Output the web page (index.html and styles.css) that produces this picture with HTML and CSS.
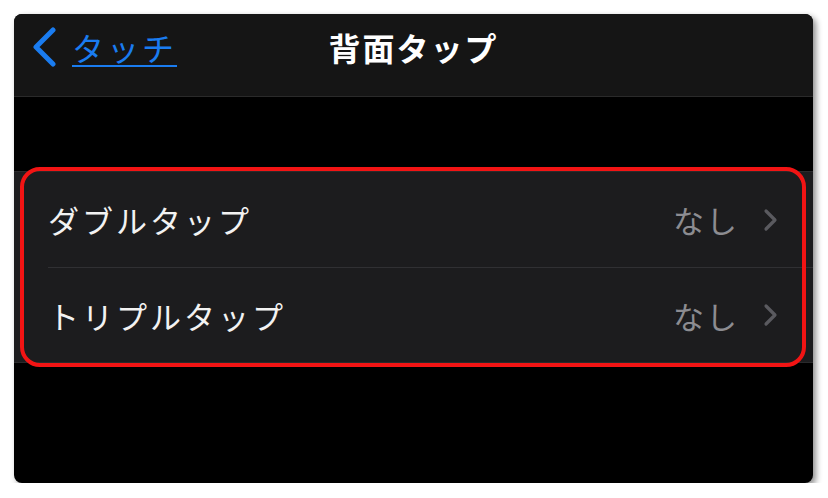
FILE: index.html
```html
<!DOCTYPE html>
<html lang="ja">
<head>
<meta charset="utf-8">
<link rel="stylesheet" href="styles.css">
</head>
<body>
<div class="screen">
  <header class="navbar">
    <a class="back" href="#">
      <svg class="back-icon" width="26" height="40" viewBox="0 0 26 40"><path d="M22 3 L5 20 L22 37" fill="none" stroke="#1a7cf0" stroke-width="5" stroke-linecap="round" stroke-linejoin="round"/></svg>
      <span class="back-label">タッチ</span>
    </a>
    <h1 class="title">背面タップ</h1>
    <div class="nav-right"></div>
  </header>
  <div class="spacer"></div>
  <section class="group">
    <div class="row">
      <span class="label">ダブルタップ</span>
      <span class="value">なし</span>
      <svg class="chev" width="16" height="24" viewBox="0 0 16 24"><path d="M3 3 L12 12 L3 21" fill="none" stroke="#5a5a5f" stroke-width="3.2" stroke-linecap="round" stroke-linejoin="round"/></svg>
    </div>
    <div class="row">
      <span class="label">トリプルタップ</span>
      <span class="value">なし</span>
      <svg class="chev" width="16" height="24" viewBox="0 0 16 24"><path d="M3 3 L12 12 L3 21" fill="none" stroke="#5a5a5f" stroke-width="3.2" stroke-linecap="round" stroke-linejoin="round"/></svg>
    </div>
    <div class="highlight"></div>
  </section>
</div>
</body>
</html>
```
FILE: styles.css
```css
html, body {
  margin: 0;
  padding: 0;
  background: #ffffff;
}
body {
  padding: 14px 0 0 14px;
  font-family: "Noto Sans CJK JP", "Noto Sans", sans-serif;
}
.screen {
  width: 799px;
  height: 469px;
  background: #000;
  border-radius: 8px;
  overflow: hidden;
  box-shadow: 3px 3px 6px rgba(0,0,0,0.45);
  display: flex;
  flex-direction: column;
}
.navbar {
  height: 66px;
  padding-bottom: 16px;
  flex: none;
  background: #151515;
  border-bottom: 1px solid #2a2a2a;
  display: grid;
  grid-template-columns: 1fr auto 1fr;
  align-items: center;
}
.back {
  display: flex;
  align-items: center;
  gap: 15px;
  padding-left: 17px;
  color: #1a7cf0;
  text-decoration: none;
}
.back-icon { flex: none; }
.back-label {
  font-size: 32px;
  letter-spacing: 3px;
  text-decoration: underline;
  text-decoration-thickness: 2px;
  text-underline-offset: 4px;
  line-height: 40px;
}
.title {
  margin: 0;
  color: #fff;
  font-size: 32px;
  font-weight: 700;
  letter-spacing: 2px;
  line-height: 40px;
}
.spacer {
  height: 74px;
  flex: none;
}
.group {
  position: relative;
  background: #1c1c1e;
  border-top: 1px solid #2a2a2c;
  border-bottom: 1px solid #2a2a2c;
}
.row {
  height: 95px;
  display: flex;
  align-items: center;
  margin-left: 34px;
  padding-right: 34px;
}
.row + .row {
  border-top: 1px solid #303033;
  height: 94px;
}
.label {
  flex: 1;
  color: #f2f2f2;
  font-size: 31px;
  letter-spacing: 3px;
}
.value {
  color: #8c8c91;
  font-size: 31px;
  letter-spacing: 2px;
  margin-right: 24px;
}
.chev { flex: none; }
.highlight {
  position: absolute;
  left: 6px;
  right: 7px;
  top: -5px;
  bottom: -5px;
  border: 4px solid #f21414;
  border-radius: 20px;
  pointer-events: none;
}
```
